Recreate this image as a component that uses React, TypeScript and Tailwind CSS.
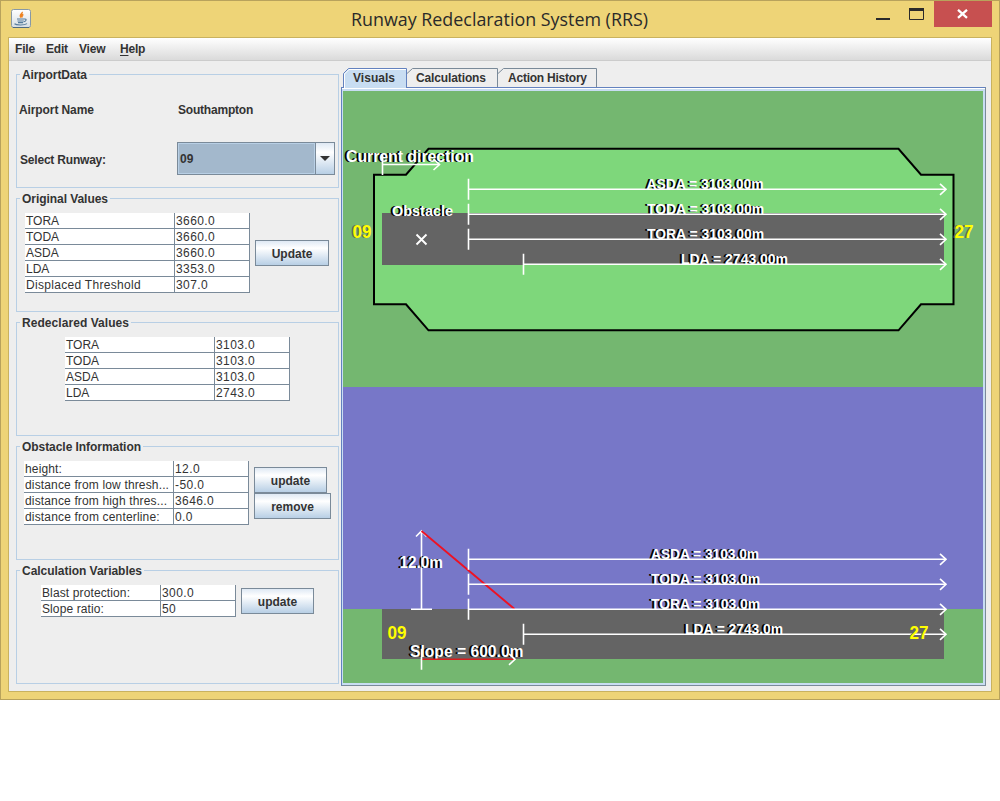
import React from "react";

type Row = [string, string, string?];

function Table({ rows, first, className }: { rows: Row[]; first: string; className: string }) {
  return (
    <div className={`border-r border-[#7a8a99] ${className}`}>
      {rows.map(([k, v, tracking]) => (
        <div key={k} className="flex h-4 border-b border-[#7a8a99] bg-white text-[12px] leading-[17px]">
          <div className={`shrink-0 whitespace-nowrap border-r border-[#7a8a99] pl-px ${first} ${tracking ?? ""}`}>{k}</div>
          <div className="pl-px tracking-[0.4px]">{v}</div>
        </div>
      ))}
    </div>
  );
}

function Btn({ children, className }: { children: string; className: string }) {
  return (
    <button
      className={`flex h-[26px] shrink-0 items-center justify-center border border-[#7a8a99] bg-linear-to-b from-[#dfe9f4] via-white via-30% to-[#b8cfe5] pt-0.5 text-[12px] font-bold ${className}`}
    >
      {children}
    </button>
  );
}

function Panel({ title, tw, children }: { title: string; tw: number; children: React.ReactNode }) {
  return (
    <fieldset className="h-[124px] w-[323px]">
      <div className="flex h-[14px] items-start">
        <div className="mt-[6px] h-px w-1 bg-[#b8cfe5]" />
        <svg className="mx-0.5 h-[14px] shrink-0 overflow-visible" width={tw} height="14">
          <text x="0" y="11" textLength={tw} fontSize="12" fontWeight="700" fill="#333">{title}</text>
        </svg>
        <div className="mt-[6px] h-px grow bg-[#b8cfe5]" />
      </div>
      <div className="-mt-[7px] h-[113px] border-x border-b border-[#b8cfe5] pt-[6px]">{children}</div>
    </fieldset>
  );
}

function Label({ x, y, w, size, children, fill = "#fff", shadow = "#000", dx = -2 }: {
  x: number; y: number; w: number; size: number; children: string; fill?: string; shadow?: string; dx?: number;
}) {
  return (
    <g fontSize={size} fontWeight="700">
      <text x={x + dx} y={y} textLength={w} lengthAdjust="spacingAndGlyphs" fill={shadow}>{children}</text>
      <text x={x + dx / 2} y={y} textLength={w} lengthAdjust="spacingAndGlyphs" fill={shadow}>{children}</text>
      <text x={x} y={y} textLength={w} lengthAdjust="spacingAndGlyphs" fill={fill}>{children}</text>
    </g>
  );
}

function Arrow({ x1, x2, y, stroke = "#fff" }: { x1: number; x2: number; y: number; stroke?: string }) {
  return (
    <g fill="none" stroke="#fff" strokeWidth="1.6">
      <path d={`M${x1} ${y}H${x2}`} stroke={stroke} />
      <path d={`M${x1} ${y - 10.5}V${y + 10.5}M${x2 - 6} ${y - 5.5}L${x2} ${y}L${x2 - 6} ${y + 5.5}`} />
    </g>
  );
}

function Visuals() {
  return (
    <svg width="640" height="592" viewBox="343 91 640 592" className="block">
      <rect x="343" y="91" width="640" height="296" fill="#74b770" />
      <path d="M374 174.7H406L428.5 148.8H898.5L921 174.7H953.5V304.3H921L898.5 330.3H428.5L406 304.3H374Z" fill="#7ed77b" stroke="#000" strokeWidth="2" />
      <rect x="382" y="213" width="562" height="52" fill="#646464" />
      <Label x={346} y={161.5} w={128} size={16}>Current direction</Label>
      <Arrow x1={382.5} x2={439.5} y={164.5} />
      <Label x={646.5} y={189} w={117} size={14.3}>ASDA = 3103.00m</Label>
      <Label x={647} y={214} w={117} size={14.3}>TODA = 3103.00m</Label>
      <Label x={647} y={239} w={117} size={14.3}>TORA = 3103.00m</Label>
      <Label x={681} y={264} w={107} size={14.3}>LDA = 2743.00m</Label>
      <Arrow x1={468.5} x2={946} y={189.3} />
      <Arrow x1={468.5} x2={946} y={214.3} />
      <Arrow x1={468.5} x2={946} y={239.3} />
      <Arrow x1={523.5} x2={946} y={264.3} />
      <Label x={392} y={215.5} w={61} size={14.3}>Obstacle</Label>
      <path d="M416.5 234.5l10 10M426.5 234.5l-10 10" stroke="#fff" strokeWidth="1.9" />
      <Label x={352.5} y={238} w={19} size={17.5} fill="#ff0" shadow="#646464" dx={-1.5}>09</Label>
      <Label x={954.5} y={238} w={19} size={17.5} fill="#ff0" shadow="#646464" dx={-1.5}>27</Label>

      <rect x="343" y="387" width="640" height="222" fill="#7777c8" />
      <rect x="343" y="609" width="640" height="74" fill="#74b770" />
      <rect x="382" y="609" width="562" height="50" fill="#646464" />
      <path d="M411 609.3h21M421.5 609V531M416 536.5l5.5-5.5l5 5.5" fill="none" stroke="#fff" strokeWidth="1.6" />
      <path d="M421.5 531L514.5 609" stroke="#ee1122" strokeWidth="1.8" />
      <Label x={399.5} y={567.5} w={43.5} size={16}>12.0m</Label>
      <path d="M421.5 556V568" stroke="#fff" strokeOpacity=".6" />
      <Label x={651} y={559} w={108} size={14.3}>ASDA = 3103.0m</Label>
      <Label x={651} y={584} w={109} size={14.3}>TODA = 3103.0m</Label>
      <Label x={651} y={609} w={109} size={14.3}>TORA = 3103.0m</Label>
      <Label x={685} y={634} w={98} size={14.3}>LDA = 2743.0m</Label>
      <Arrow x1={468.5} x2={946} y={559.3} />
      <Arrow x1={468.5} x2={946} y={584.3} />
      <Arrow x1={468.5} x2={946} y={609.3} />
      <Arrow x1={523.5} x2={946} y={634.3} />
      <Label x={410} y={657} w={113.5} size={16}>Slope = 600.0m</Label>
      <Arrow x1={421.5} x2={515} y={659.3} stroke="#d81c1c" />
      <Label x={387.5} y={639} w={19} size={17.5} fill="#ff0" shadow="#646464" dx={-1}>09</Label>
      <Label x={909.5} y={639} w={19} size={17.5} fill="#ff0" shadow="#646464" dx={-1}>27</Label>
    </svg>
  );
}

function Tabs() {
  return (
    <svg width="256" height="20" viewBox="342 68 256 20" className="relative z-10 -mb-px ml-px block" fontSize="12" fontWeight="700" fill="#333">
      <path d="M343.5 88V73.5L348.5 68.5H406.5V88" fill="#c8ddf2" stroke="#6382bf" />
      <path d="M344.5 88V74L349 69.5H406" fill="none" stroke="#fff" />
      <path d="M407 73.5L412.5 68.5H497.5V87M498 73.5L503.5 68.5H596.5V87" fill="none" stroke="#7a8a99" />
      <path d="M407 87.5H598" stroke="#6382bf" />
      <text x="353" y="82" textLength="42">Visuals</text>
      <text x="416" y="82" textLength="70">Calculations</text>
      <text x="508" y="82" textLength="79">Action History</text>
    </svg>
  );
}

export default function App() {
  return (
    <div className="h-[801px] w-[1000px] bg-white font-['Liberation_Sans',sans-serif] text-[#333]">
      <div className="h-[700px] border border-[#b8a25c] bg-[#eed477] px-[7px] pb-[7px]">
        <header className="flex h-9">
          <svg width="20" height="20" viewBox="0 0 20 20" className="ml-[3px] mt-2">
            <defs>
              <linearGradient id="cup" x2="0" y2="1"><stop stopColor="#fff" /><stop offset="1" stopColor="#d5dde3" /></linearGradient>
            </defs>
            <rect x=".5" y=".5" width="19" height="18" rx="2" fill="url(#cup)" stroke="#8798a5" />
            <path d="M2 18.5h16" stroke="#4f6a80" />
            <path d="M11 3c1.3 1.6-3.4 2.6-1 5.4M12.4 5.6c-2.2.9-1.6 1.6-1.2 2.8" fill="none" stroke="#ee8322" strokeWidth="1.6" />
            <path d="M6 10h7.5M6.5 12h6.3M7 13.6h5.2M3.5 14.8c2 1.6 10 1.6 12.5-.2M13.5 10c2.6-.3 1.8 2.2-.6 2.7" fill="none" stroke="#557b9b" strokeWidth="1.1" />
          </svg>
          <svg width="300" height="36" className="ml-[319px] font-['Open_Sans',sans-serif]">
            <text x="1" y="25" fontSize="18" textLength="297" lengthAdjust="spacingAndGlyphs" fill="#2a2a2a">Runway Redeclaration System (RRS)</text>
          </svg>
          <svg width="24" height="36" className="ml-[217px]"><path d="M9 17h14v2H9z" fill="#2a2a2a" /></svg>
          <svg width="42" height="36"><path d="M18.5 8.5h14v10h-14z" fill="none" stroke="#2a2a2a" /><path d="M18 7h15v3H18z" fill="#2a2a2a" /></svg>
          <button className="ml-[1px] flex h-[26px] w-[58px] items-center justify-center bg-[#c75050]">
            <svg width="12" height="10"><path d="M1 .8l9 8M10 .8l-9 8" stroke="#fff" strokeWidth="2.3" /></svg>
          </button>
        </header>

        <div className="h-[655px] border border-[#c9b25f] bg-[#eee]">
          <nav className="flex h-[23px] border-b border-[#ccc] bg-linear-to-b from-white to-[#dadada] pl-[6px] pt-px text-[12px] font-bold leading-[21px] tracking-[-0.2px]">
            <span className="w-[31px]">File</span>
            <span className="w-[33px]">Edit</span>
            <span className="w-[41px]">View</span>
            <span><u className="underline-offset-2">H</u>elp</span>
          </nav>

          <div className="flex pl-[7px] pt-[7px]">
            <aside className="w-[325px]">
              <Panel title="AirportData" tw={65}>
                <div className="flex flex-col text-[12px] font-bold tracking-[-0.2px]">
                  <div className="flex pl-[2px] pt-[21px] leading-[16px]">
                    <span className="w-[159px] tracking-[-0.1px]">Airport Name</span><span>Southampton</span>
                  </div>
                  <div className="mt-6 flex items-center pl-[3px]">
                    <span className="w-[157px] pt-0.5">Select Runway:</span>
                    <div className="flex h-[33px] w-[158px] border border-[#7a8a99]">
                      <div className="flex grow items-center border border-[#b8cfe5] bg-[#a3b8cc] pl-[1px] tracking-[0.2px]">09</div>
                      <div className="flex w-[19px] items-center justify-center border-l border-[#7a8a99] bg-linear-to-b from-[#dfe9f4] via-white via-30% to-[#b8cfe5]">
                        <svg width="10" height="5"><path d="M0 0h10L5 5z" fill="#333" /></svg>
                      </div>
                    </div>
                  </div>
                </div>
              </Panel>
              <Panel title="Original Values" tw={86}>
                <div className="flex items-start pl-2 pt-2">
                  <Table className="w-[225px]" first="w-[150px]" rows={[["TORA", "3660.0"], ["TODA", "3660.0"], ["ASDA", "3660.0"], ["LDA", "3353.0"], ["Displaced Threshold", "307.0", "tracking-[0.3px]"]]} />
                  <Btn className="ml-[5px] mt-[27px] w-[74px]">Update</Btn>
                </div>
              </Panel>
              <Panel title="Redeclared Values" tw={107}>
                <div className="flex pl-12 pt-2">
                  <Table className="w-[225px]" first="w-[150px]" rows={[["TORA", "3103.0"], ["TODA", "3103.0"], ["ASDA", "3103.0"], ["LDA", "2743.0"]]} />
                </div>
              </Panel>
              <Panel title="Obstacle Information" tw={119}>
                <div className="flex items-start pl-[7px] pt-2">
                  <Table className="w-[225px]" first="w-[150px]" rows={[["height:", "12.0", "tracking-[0.15px]"], ["distance from low thresh...", "-50.0", "tracking-[0.15px]"], ["distance from high thres...", "3646.0", "tracking-[0.15px]"], ["distance from centerline:", "0.0", "tracking-[0.16px]"]]} />
                  <div className="ml-[5px] mt-[6px]">
                    <Btn className="w-[73px]">update</Btn>
                    <Btn className="w-[77px]">remove</Btn>
                  </div>
                </div>
              </Panel>
              <Panel title="Calculation Variables" tw={120}>
                <div className="flex items-start pl-6 pt-2">
                  <Table className="w-[195px]" first="w-[120px]" rows={[["Blast protection:", "300.0", "tracking-[0.12px]"], ["Slope ratio:", "50", "tracking-[0.1px]"]]} />
                  <Btn className="ml-[5px] mt-[3px] w-[73px]">update</Btn>
                </div>
              </Panel>
            </aside>

            <main>
              <Tabs />
              <div className="border border-[#7a8a99] border-l-[#6382bf] border-t-[#6382bf] bg-[#c8ddf2]">
                <div className="border-t border-white pb-0.5 pl-px pr-0.5 pt-0.5">
                  <Visuals />
                </div>
              </div>
            </main>
          </div>
        </div>
      </div>
    </div>
  );
}
